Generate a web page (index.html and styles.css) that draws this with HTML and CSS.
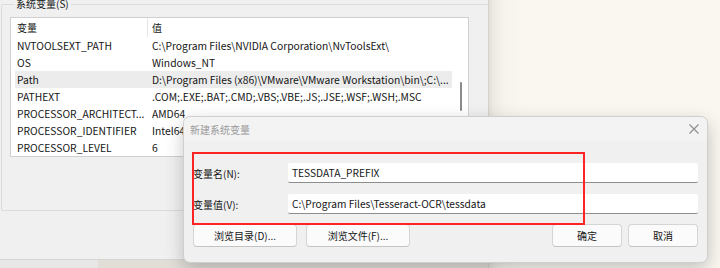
FILE: index.html
```html
<!DOCTYPE html>
<html lang="zh-CN">
<head>
<meta charset="utf-8">
<title>系统变量</title>
<link rel="stylesheet" href="styles.css">
</head>
<body>
<div class="window">
  <fieldset class="group">
    <legend class="group-title">系统变量(S)</legend>
    <div class="list">
      <div class="list-body">
        <div class="list-head">
          <div class="c1">变量</div>
          <div class="c2">值</div>
        </div>
        <div class="row"><div class="c1">NVTOOLSEXT_PATH</div><div class="c2">C:\Program Files\NVIDIA Corporation\NvToolsExt\</div></div>
        <div class="row"><div class="c1">OS</div><div class="c2">Windows_NT</div></div>
        <div class="row sel"><div class="c1">Path</div><div class="c2">D:\Program Files (x86)\VMware\VMware Workstation\bin\;C:\...</div></div>
        <div class="row"><div class="c1">PATHEXT</div><div class="c2">.COM;.EXE;.BAT;.CMD;.VBS;.VBE;.JS;.JSE;.WSF;.WSH;.MSC</div></div>
        <div class="row"><div class="c1">PROCESSOR_ARCHITECT...</div><div class="c2">AMD64</div></div>
        <div class="row"><div class="c1">PROCESSOR_IDENTIFIER</div><div class="c2">Intel64 Family 6 Model 158 Stepping 10, GenuineIntel</div></div>
        <div class="row"><div class="c1">PROCESSOR_LEVEL</div><div class="c2">6</div></div>
      </div>
      <div class="scrollbar"><div class="thumb"></div></div>
    </div>
  </fieldset>
</div>
<div class="desktop"></div>
<div class="strip"><div class="strip-a"></div><div class="strip-b"></div></div>

<div class="dialog">
  <div class="dlg-title">
    <span class="dlg-caption">新建系统变量</span>
    <svg class="close" width="10" height="10" viewBox="0 0 10 10"><path d="M0.5 0.5 L9.5 9.5 M9.5 0.5 L0.5 9.5" stroke="#8c8c8c" stroke-width="1.1" fill="none"/></svg>
  </div>
  <div class="dlg-body">
    <div class="field">
      <label class="field-label">变量名(N):</label>
      <div class="input">TESSDATA_PREFIX</div>
    </div>
    <div class="field">
      <label class="field-label">变量值(V):</label>
      <div class="input">C:\Program Files\Tesseract-OCR\tessdata</div>
    </div>
    <div class="buttons">
      <button class="btn btn-wide">浏览目录(D)...</button>
      <button class="btn btn-wide">浏览文件(F)...</button>
      <span class="spacer"></span>
      <button class="btn btn-ok">确定</button>
      <button class="btn btn-ok">取消</button>
    </div>
  </div>
  <div class="mark"></div>
</div>
</body>
</html>
```

FILE: styles.css
```css
* { box-sizing: border-box; }
html, body { margin: 0; padding: 0; }
body {
  width: 720px;
  height: 268px;
  overflow: hidden;
  position: relative;
  display: grid;
  grid-template-columns: 488px 1fr;
  grid-template-rows: 260px 8px;
  font-family: "Noto Sans CJK SC", sans-serif;
  font-size: 10px;
  color: #151515;
  background: #f9f7f0;
}
.window {
  grid-column: 1;
  grid-row: 1;
  background: #f0f0f0;
  border-bottom: 1px solid #d6d6d6;
  overflow: hidden;
  padding: 0 0 0 1px;
}
.group {
  margin: -2px 0 0 0;
  width: 520px;
  height: 213px;
  border: 1px solid #dcdcdc;
  border-radius: 2px;
  padding: 0 0 0 8px;
}
.group-title {
  padding: 0 2px;
  margin-left: 4px;
  line-height: 12px;
}
.list {
  margin-top: 7px;
  width: 459px;
  height: 140px;
  background: #fff;
  border: 1px solid #d0d0d0;
  display: flex;
}
.list-body { flex: 1; padding: 0 3px 0 4px; min-width: 0; }
.list-head {
  display: flex;
  height: 19px;
  align-items: center;
}
.list-head .c1 { border-right: 1px solid #e5e5e5; height: 19px; line-height: 19px; }
.row {
  display: flex;
  height: 17px;
  line-height: 17px;
  white-space: nowrap;
  font-size: 10.3px;
}
.row.sel { background: #ececec; }
.c1 { width: 133px; padding-left: 2px; flex: none; overflow: hidden; }
.c2 { padding-left: 4px; overflow: hidden; }
.scrollbar { width: 13px; flex: none; padding-left: 5px; }
.thumb { width: 2px; height: 29px; margin-top: 64px; background: #8a8a8a; border-radius: 1px; }

.desktop {
  grid-column: 2;
  grid-row: 1 / 3;
  background: linear-gradient(to right, #c8c6c0 0, #e2e0d9 1px, #edebe4 6px, #f5f3ec 16px, #f9f7f0 34px);
}
.strip { grid-column: 1; grid-row: 2; display: flex; }
.strip-a { width: 98px; background: #e7e7e7; }
.strip-b { flex: 1; background: #e1ded8; }

.dialog {
  position: absolute;
  left: 183px;
  top: 116px;
  width: 525px;
  height: 147px;
  background: #f0f0f0;
  border: 1px solid #cfcfcf;
  border-radius: 7px;
  box-shadow: 0 6px 18px rgba(0,0,0,0.22);
}
.dlg-title {
  height: 24px;
  display: flex;
  align-items: center;
  justify-content: space-between;
  padding: 0 6px 0 6px;
  background: #f3f3f3;
  border-radius: 7px 7px 0 0;
}
.dlg-caption { color: #9a9a9a; }
.close { margin-right: 2px; }
.dlg-body { padding: 22px 9px 0 9px; }
.field { display: flex; align-items: center; height: 20px; margin-bottom: 10px; }
.field:first-child { margin-bottom: 11px; }
.field-label { width: 95px; }
.input {
  flex: 1;
  height: 20px;
  line-height: 19px;
  background: #fff;
  border-bottom: 1px solid #8d8d8d;
  border-radius: 2px;
  padding-left: 4px;
  font-size: 10.2px;
}
.buttons { display: flex; margin-top: 4px; }
.btn {
  font: inherit;
  color: #151515;
  height: 23px;
  background: #fbfbfb;
  border: 1px solid #d5d5d5;
  border-bottom-color: #c4c4c4;
  border-radius: 4px;
  padding: 0;
}
.btn-wide { width: 104px; margin-right: 9px; }
.btn-ok { width: 70px; margin-left: 6px; }
.spacer { flex: 1; }
.mark {
  position: absolute;
  left: 8px;
  top: 35px;
  width: 393px;
  height: 73px;
  border: 2px solid #ff2323;
}
```
